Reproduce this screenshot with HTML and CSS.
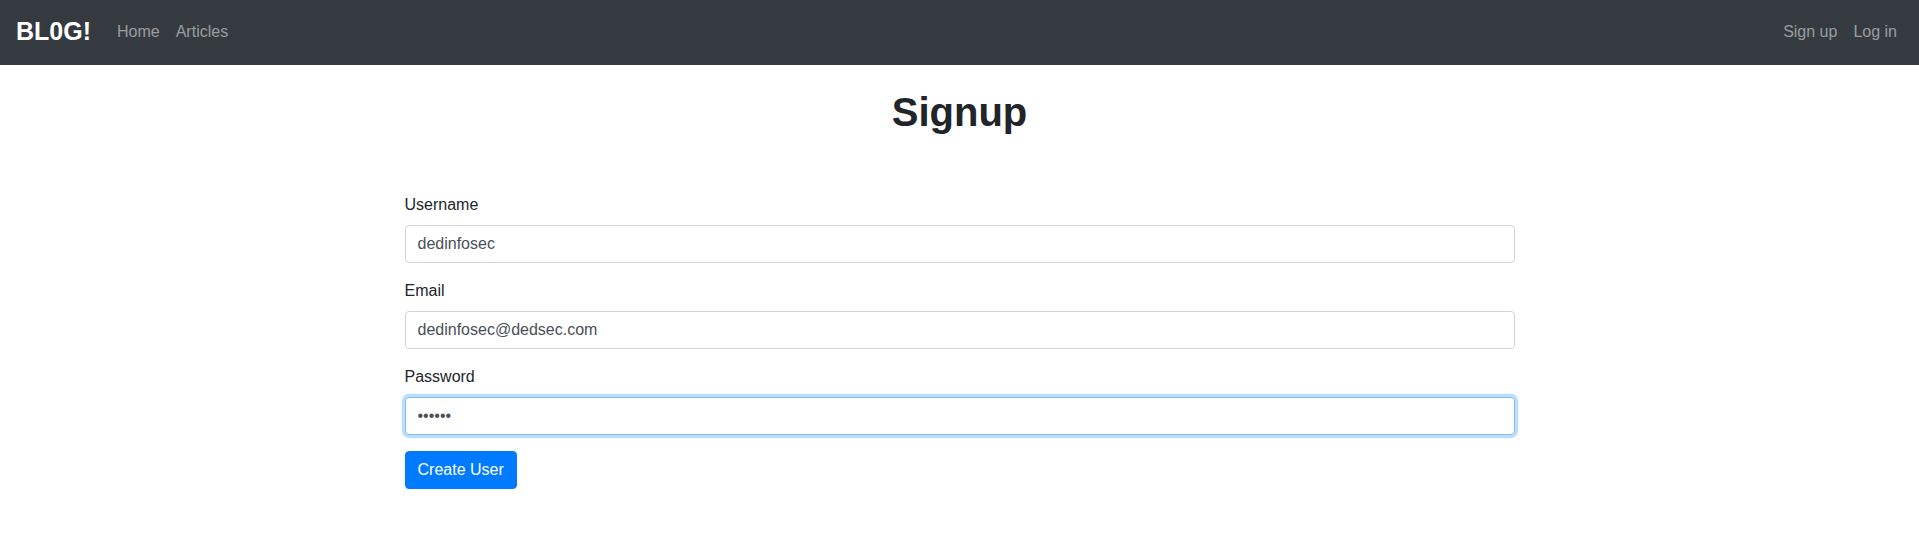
FILE: index.html
```html
<!DOCTYPE html>
<html lang="en">
<head>
<meta charset="utf-8">
<title>Signup</title>
<link rel="stylesheet" href="styles.css">
</head>
<body>
<nav class="navbar">
  <div class="nav-left">
    <a class="brand" href="#">BL0G!</a>
    <a class="nav-link" href="#">Home</a>
    <a class="nav-link" href="#">Articles</a>
  </div>
  <div class="nav-right">
    <a class="nav-link" href="#">Sign up</a>
    <a class="nav-link" href="#">Log in</a>
  </div>
</nav>
<main class="container">
  <h1 class="title">Signup</h1>
  <form class="form">
    <div class="form-group">
      <label class="label" for="username">Username</label>
      <input class="form-control" id="username" type="text" value="dedinfosec">
    </div>
    <div class="form-group">
      <label class="label" for="email">Email</label>
      <input class="form-control" id="email" type="email" value="dedinfosec@dedsec.com">
    </div>
    <div class="form-group">
      <label class="label" for="password">Password</label>
      <input class="form-control focused" id="password" type="password" value="secret">
    </div>
    <button class="btn" type="button">Create User</button>
  </form>
</main>
</body>
</html>
```
FILE: styles.css
```css
* { box-sizing: border-box; }
html, body { margin: 0; padding: 0; }
body {
  font-family: "Liberation Sans", Arial, sans-serif;
  font-size: 16px;
  line-height: 1.5;
  color: #212529;
  background: #fff;
}
.navbar {
  height: 65px;
  background: #343a40;
  display: flex;
  align-items: center;
  justify-content: space-between;
  padding: 0 14px 2px 16px;
}
.nav-left, .nav-right { display: flex; align-items: center; }
.brand {
  color: #fff;
  font-weight: 700;
  font-size: 25px;
  letter-spacing: 0;
  text-decoration: none;
  margin-right: 18px;
  line-height: 1.5;
}
.nav-link {
  color: rgba(255,255,255,.5);
  text-decoration: none;
  padding: 8px;
}
.container {
  max-width: 1140px;
  margin: 0 auto;
  padding: 0 15px;
}
.title {
  text-align: center;
  font-size: 40px;
  font-weight: 700;
  line-height: 1.2;
  margin: 23px 0 8px;
}
.form { margin-top: 57px; }
.form-group { margin-bottom: 16px; }
.label { display: block; margin-bottom: 8px; }
.form-control {
  display: block;
  width: 100%;
  height: 38px;
  padding: 6px 12px;
  font-family: inherit;
  font-size: 16px;
  line-height: 1.5;
  color: #495057;
  background: #fff;
  border: 1px solid #ced4da;
  border-radius: 4px;
  outline: none;
}
.form-control.focused {
  border-color: #80bdff;
  box-shadow: 0 0 0 3.2px rgba(0,123,255,.25);
}
.btn {
  display: inline-block;
  font-family: inherit;
  font-size: 16px;
  line-height: 1.5;
  padding: 6px 12px;
  color: #fff;
  background: #007bff;
  border: 1px solid #007bff;
  border-radius: 4px;
}
```
